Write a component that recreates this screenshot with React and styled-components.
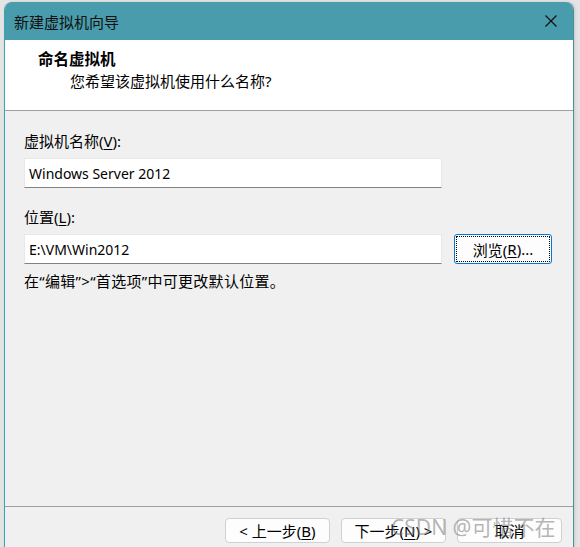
import React from "react";
import styled, { createGlobalStyle } from "styled-components";

const GlobalStyle = createGlobalStyle`
  html, body {
    margin: 0;
    padding: 0;
    background: #e4e4e4;
  }
  body {
    font-family: "Noto Sans", "Noto Sans CJK SC", sans-serif;
    color: #000;
  }
`;

const Page = styled.div`
  padding: 2px 6px 0 4px;
  height: 547px;
  box-sizing: border-box;
  overflow: hidden;
`;

const Window = styled.div`
  position: relative;
  height: 560px;
  display: flex;
  flex-direction: column;
  border-radius: 8px 8px 0 0;
  border-left: 1px solid #3aa3b8;
  border-right: 1px solid #4a8f9c;
  overflow: hidden;
  background: #f0f0f0;
  box-shadow: 1px 0 3px rgba(0, 0, 0, 0.12);
`;

const TitleBar = styled.div`
  height: 38px;
  flex-shrink: 0;
  display: flex;
  align-items: center;
  justify-content: space-between;
  background: #489cab;
  padding-left: 9px;
`;

const Title = styled.span`
  font-family: "Noto Sans CJK SC", sans-serif;
  font-size: 15px;
  color: #111;
`;

const CloseButton = styled.div`
  width: 44px;
  height: 38px;
  display: flex;
  align-items: center;
  justify-content: center;
`;

const Header = styled.div`
  height: 71px;
  flex-shrink: 0;
  background: #fff;
  border-bottom: 1px solid #a0a0a0;
  padding: 8px 0 0 33px;
  box-sizing: border-box;
  font-family: "Noto Sans", "Noto Sans CJK SC", sans-serif;
`;

const HeaderTitle = styled.div`
  font-size: 15.5px;
  font-weight: 700;
  line-height: 22px;
`;

const HeaderSub = styled.div`
  font-size: 15px;
  line-height: 22px;
  padding-left: 32px;
`;

const Body = styled.div`
  flex: 1;
  display: flex;
  flex-direction: column;
  padding: 19px 0 0 19px;
  font-family: "Noto Sans", "Noto Sans CJK SC", sans-serif;
  font-size: 15px;
`;

const Label = styled.div`
  line-height: 22px;
  margin-bottom: 6px;
`;

const Row = styled.div`
  display: flex;
  align-items: center;
  gap: 12px;
  margin-bottom: ${(p) => p.$gap || 0}px;
`;

const TextBox = styled.div`
  width: 418px;
  height: 30px;
  box-sizing: border-box;
  background: #fff;
  border: 1px solid #e8e8e8;
  border-bottom: 1px solid #828282;
  display: flex;
  align-items: center;
  padding-left: 4px;
  font-family: "Noto Sans", sans-serif;
  font-size: 14px;
  color: #000;
`;

const Hint = styled.div`
  line-height: 22px;
  margin-top: 6px;
  letter-spacing: 0.3px;
`;

const Button = styled.div`
  position: relative;
  width: ${(p) => p.$w || 105}px;
  height: ${(p) => p.$h || 25}px;
  box-sizing: border-box;
  display: flex;
  align-items: center;
  justify-content: center;
  background: #fdfdfd;
  border: 1px solid ${(p) => (p.$focused ? "#0078d4" : "#d0d0d0")};
  border-radius: ${(p) => (p.$focused ? 3 : 4)}px;
  font-family: "Noto Sans", "Noto Sans CJK SC", sans-serif;
  font-size: 15px;
  color: #000;

  ${(p) =>
    p.$focused &&
    `
    &::after {
      content: "";
      position: absolute;
      inset: 1px;
      border: 1px dotted #000;
      border-radius: 1px;
    }
  `}
`;

const Key = styled.span`
  text-decoration: underline;
  text-underline-offset: 2px;
`;

const Footer = styled.div`
  height: 56px;
  flex-shrink: 0;
  border-top: 1px solid #a0a0a0;
  display: flex;
  justify-content: flex-end;
  gap: 11px;
  padding: 11px 11px 0 0;
  box-sizing: border-box;
`;

/* site watermark stamped over the lower right corner */
const Watermark = styled.div`
  position: absolute;
  left: 386px;
  top: 509px;
  font-family: "Noto Sans", "Noto Sans CJK SC", sans-serif;
  font-size: 21px;
  color: rgba(110, 110, 110, 0.5);
  white-space: nowrap;
  pointer-events: none;
`;

function CloseIcon() {
  return (
    <svg width="12" height="12" viewBox="0 0 12 12">
      <path d="M0.5 0.5 L11.5 11.5 M11.5 0.5 L0.5 11.5" stroke="#111" strokeWidth="1.2" />
    </svg>
  );
}

export default function App() {
  return (
    <>
      <GlobalStyle />
      <Page>
        <Window>
          <TitleBar>
            <Title>新建虚拟机向导</Title>
            <CloseButton>
              <CloseIcon />
            </CloseButton>
          </TitleBar>

          <Header>
            <HeaderTitle>命名虚拟机</HeaderTitle>
            <HeaderSub>您希望该虚拟机使用什么名称?</HeaderSub>
          </Header>

          <Body>
            <Label>
              虚拟机名称(<Key>V</Key>):
            </Label>
            <Row $gap={18}>
              <TextBox>Windows Server 2012</TextBox>
            </Row>
            <Label>
              位置(<Key>L</Key>):
            </Label>
            <Row>
              <TextBox>E:\VM\Win2012</TextBox>
              <Button $focused $w={98} $h={30}>
                浏览(<Key>R</Key>)...
              </Button>
            </Row>
            <Hint>在“编辑”&gt;“首选项”中可更改默认位置。</Hint>
          </Body>

          <Footer>
            <Button>
              &lt; 上一步(<Key>B</Key>)
            </Button>
            <Button>
              下一步(<Key>N</Key>) &gt;
            </Button>
            <Button>取消</Button>
          </Footer>

          <Watermark>CSDN @可惜不在</Watermark>
        </Window>
      </Page>
    </>
  );
}
